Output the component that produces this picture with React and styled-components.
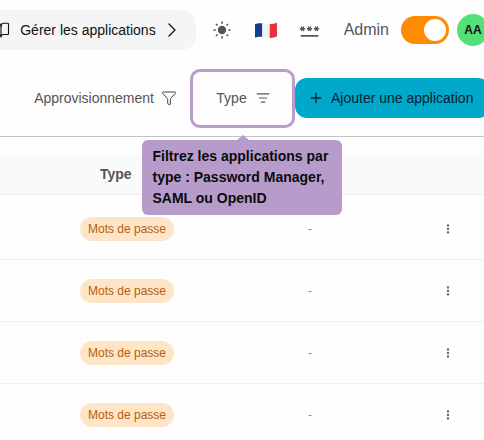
import React from "react";
import styled, { createGlobalStyle } from "styled-components";
import { BookOpen, ChevronRight, Funnel, ListFilter, Plus } from "lucide-react";
import { MdMoreVert, MdPassword } from "react-icons/md";

const GlobalStyle = createGlobalStyle`
  html, body {
    margin: 0;
    padding: 0;
    background: #fdfdfd;
    font-family: "Liberation Sans", Arial, sans-serif;
  }
`;

const Page = styled.div`
  position: relative;
  width: 484px;
  height: 440px;
  overflow: hidden;
  background: #fefefe;
`;

const Header = styled.header`
  height: 60px;
  display: flex;
  align-items: center;
  justify-content: flex-end;
  background: #fefefe;
  box-shadow: 0 1px 3px rgba(0, 0, 0, 0.16);
`;

const AppsButton = styled.div`
  flex: none;
  height: 40px;
  width: 230px;
  margin-right: 16px;
  padding: 0 12px 0 0;
  box-sizing: border-box;
  display: flex;
  align-items: center;
  justify-content: flex-end;
  background: #f5f5f5;
  border-radius: 14px;
  color: #111;
  font-size: 14px;
  white-space: nowrap;
  svg {
    flex: none;
  }
  span {
    margin: 0 4px 0 10px;
  }
`;

const IconSlot = styled.div`
  flex: none;
  width: ${(p) => p.$w}px;
  margin-right: ${(p) => p.$gap}px;
  display: flex;
  justify-content: center;
  color: #555;
`;

const AdminLabel = styled.span`
  flex: none;
  color: #555;
  font-size: 16px;
`;

const Toggle = styled.div`
  flex: none;
  width: 48px;
  height: 28px;
  margin-left: 12px;
  padding: 0 3px;
  box-sizing: border-box;
  display: flex;
  align-items: center;
  justify-content: flex-end;
  background: #ff8c00;
  border-radius: 14px;
  &::after {
    content: "";
    width: 22px;
    height: 22px;
    border-radius: 50%;
    background: #fff;
  }
`;

const Avatar = styled.div`
  flex: none;
  width: 32px;
  height: 32px;
  margin-left: 8px;
  margin-right: -5px;
  display: flex;
  align-items: center;
  justify-content: center;
  border-radius: 50%;
  background: #55e077;
  color: #111;
  font-size: 12px;
  font-weight: 700;
`;

const Toolbar = styled.div`
  height: 76px;
  display: flex;
  align-items: center;
  justify-content: flex-end;
  margin-right: -6px;
  border-bottom: 1px solid #c4c4c4;
  background: #fdfdfd;
`;

const FilterLabel = styled.div`
  flex: none;
  display: flex;
  align-items: center;
  gap: 7px;
  margin-right: 13px;
  color: #555;
  font-size: 14px;
  svg {
    color: #444;
  }
`;

const FocusBox = styled.div`
  flex: none;
  width: 105px;
  height: 59px;
  box-sizing: border-box;
  padding-left: 1px;
  display: flex;
  align-items: center;
  justify-content: center;
  gap: 9px;
  border: 3px solid #b89ccb;
  border-radius: 10px;
  color: #555;
  font-size: 14px;
`;

const AddButton = styled.div`
  flex: none;
  width: 195px;
  height: 40px;
  box-sizing: border-box;
  padding-left: 13px;
  display: flex;
  align-items: center;
  gap: 7px;
  background: #00a8cc;
  border-radius: 12px;
  color: #07222c;
  font-size: 14px;
`;

const Tooltip = styled.div`
  position: absolute;
  left: 142px;
  top: 140px;
  width: 200px;
  height: 75px;
  box-sizing: border-box;
  padding: 6px 10.5px;
  background: #b79ccb;
  border-radius: 6px;
  color: #0b0b0b;
  font-size: 14px;
  font-weight: 700;
  line-height: 21px;
  z-index: 2;
  &::before {
    content: "";
    position: absolute;
    left: 95px;
    top: -5px;
    border-left: 6px solid transparent;
    border-right: 6px solid transparent;
    border-bottom: 5px solid #b79ccb;
  }
`;

const TableHead = styled.div`
  height: 40px;
  margin-top: 17px;
  padding-left: 100px;
  display: flex;
  align-items: center;
  background: #fafafa;
  border-bottom: 1px solid #eeeeee;
  color: #555;
  font-size: 14px;
  font-weight: 700;
`;

const Rows = styled.div`
  padding-top: 3px;
`;

const Row = styled.div`
  height: 62px;
  box-sizing: border-box;
  display: grid;
  grid-template-columns: 80px 200px 60px 98px 20px;
  align-items: center;
  border-bottom: 1px solid #f0f0f0;
`;

const Pill = styled.span`
  grid-column: 2;
  justify-self: start;
  height: 24px;
  padding: 0 8px;
  display: inline-flex;
  align-items: center;
  background: #ffe5c8;
  border-radius: 12px;
  color: #b3600c;
  font-size: 12px;
`;

const Dash = styled.span`
  grid-column: 3;
  text-align: center;
  color: #888;
  font-size: 12px;
`;

const Dots = styled.div`
  grid-column: 5;
  display: flex;
  justify-content: center;
  color: #666;
`;

function SunIcon() {
  return (
    <svg width="20" height="20" viewBox="0 0 20 20" fill="currentColor">
      <circle cx="10" cy="10" r="4.2" />
      <g stroke="currentColor" strokeWidth="1.6" strokeLinecap="butt">
        <path d="M10 1.500v2.200M10 16.300v2.200M1.500 10h2.200M16.300 10h2.200" />
        <path d="M4 4l1.500 1.500M14.500 14.500L16 16M4 16l1.500-1.500M14.500 5.500L16 4" />
      </g>
    </svg>
  );
}

function FlagFr() {
  return (
    <svg width="22" height="20" viewBox="0 0 22 20">
      <path d="M0 4c3-1 5-1 7.300-.7V17c-2.300-.3-4.300-.3-7.300.7z" fill="#1a3a94" />
      <path d="M7.300 3.300c2.500.3 4.800 1 7.400.9v13.700c-2.600.1-4.900-.6-7.400-.9z" fill="#f2f2f2" />
      <path d="M14.700 4.200c2.700-.1 5-.6 7.300-1.500v13.700c-2.300.9-4.600 1.400-7.300 1.500z" fill="#e8303c" />
    </svg>
  );
}

const rows = [0, 1, 2, 3];

export default function App() {
  return (
    <Page>
      <GlobalStyle />
      <Header>
        <AppsButton>
          <BookOpen size={18} strokeWidth={1.5} />
          <span>Gérer les applications</span>
          <ChevronRight size={24} strokeWidth={1.3} />
        </AppsButton>
        <IconSlot $w={20} $gap={23}>
          <SunIcon />
        </IconSlot>
        <IconSlot $w={22} $gap={22}>
          <FlagFr />
        </IconSlot>
        <IconSlot $w={22} $gap={23}>
          <MdPassword size={21} />
        </IconSlot>
        <AdminLabel>Admin</AdminLabel>
        <Toggle />
        <Avatar>AA</Avatar>
      </Header>
      <Toolbar>
        <FilterLabel>
          Approvisionnement
          <Funnel size={16} strokeWidth={1.5} />
        </FilterLabel>
        <FocusBox>
          Type
          <ListFilter size={14} strokeWidth={2} />
        </FocusBox>
        <AddButton>
          <Plus size={16} strokeWidth={2} />
          Ajouter une application
        </AddButton>
      </Toolbar>
      <Tooltip>Filtrez les applications par type : Password Manager, SAML ou OpenID</Tooltip>
      <TableHead>Type</TableHead>
      <Rows>
        {rows.map((r) => (
          <Row key={r}>
            <Pill>Mots de passe</Pill>
            <Dash>-</Dash>
            <Dots>
              <MdMoreVert size={14} />
            </Dots>
          </Row>
        ))}
      </Rows>
    </Page>
  );
}
